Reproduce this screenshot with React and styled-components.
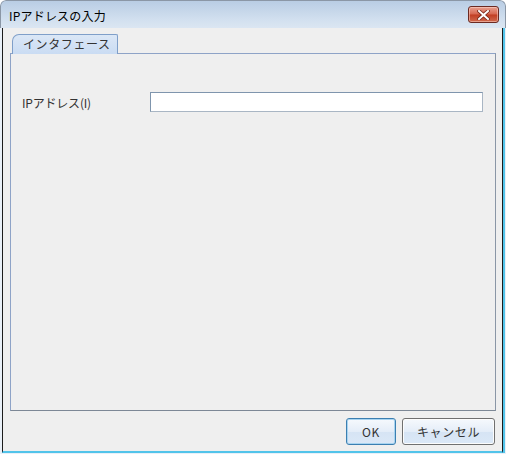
import styled, { createGlobalStyle } from 'styled-components';

const GlobalStyle = createGlobalStyle`
  html, body {
    margin: 0;
    padding: 0;
    background: #ffffff;
  }
  body {
    font-family: "Noto Sans CJK JP", "DejaVu Sans", sans-serif;
    font-size: 12px;
  }
`;

const Window = styled.div`
  width: 506px;
  height: 454px;
  box-sizing: border-box;
  display: flex;
  flex-direction: column;
  background: #e9f0f8;
  border-top-left-radius: 6px;
  border-top-right-radius: 6px;
  overflow: hidden;
`;

const TitleBar = styled.div`
  height: 28px;
  flex: none;
  box-sizing: border-box;
  display: flex;
  align-items: flex-start;
  justify-content: space-between;
  padding: 0 6px 0 8px;
  border: 1px solid #8b97a6;
  border-bottom: none;
  border-top-left-radius: 6px;
  border-top-right-radius: 6px;
  background: linear-gradient(#b9cde4, #d2e0ef 70%, #dbe6f2);
`;

const Title = styled.span`
  margin-top: 6px;
  font-size: 12px;
  color: #000;
  letter-spacing: 0.2px;
`;

const CloseButton = styled.div`
  margin-top: 5px;
  width: 31px;
  height: 17px;
  box-sizing: border-box;
  border: 1px solid #6b2a22;
  border-radius: 3px;
  background: linear-gradient(#e8a08f, #d6664f 48%, #c13d22 52%, #cf6a4e);
  display: flex;
  align-items: center;
  justify-content: center;
  box-shadow: inset 0 0 0 1px rgba(255, 220, 210, 0.5);
`;

const Body = styled.div`
  flex: 1;
  display: flex;
  flex-direction: column;
  margin: 0 3px 2px 2px;
  background: #efefef;
  border-left: 1px solid #1c1c1c;
  border-right: 1px solid #1c1c1c;
  border-bottom: 2px solid #52c4ea;
  box-shadow: 2px 0 0 #52c4ea;
  padding: 6px 6px 0 7px;
`;

const TabStrip = styled.div`
  display: flex;
  padding-left: 2px;
  height: 19px;
`;

const Tab = styled.div`
  width: 106px;
  box-sizing: border-box;
  border: 1px solid #7f9fc9;
  border-bottom: none;
  border-top-left-radius: 7px 7px;
  border-top-right-radius: 2px;
  background: linear-gradient(#dbe7f6, #cadcf3);
  color: #333;
  font-size: 12px;
  letter-spacing: 0.6px;
  padding-left: 10px;
  line-height: 18px;
  position: relative;
  z-index: 1;
  margin-bottom: -1px;
`;

const Panel = styled.div`
  height: 358px;
  box-sizing: border-box;
  border-top: 1px solid #8ea3c7;
  border-left: 1px solid #8ea3c7;
  border-right: 1px solid #8a96a6;
  border-bottom: 1px solid #7d8896;
  padding: 38px 12px 0 11px;
`;

const FieldRow = styled.div`
  display: grid;
  grid-template-columns: 128px 1fr;
  align-items: center;
`;

const Label = styled.label`
  font-size: 12px;
  color: #333;
  letter-spacing: -0.2px;
`;

const TextInput = styled.input`
  height: 20px;
  box-sizing: border-box;
  border: 1px solid #7f95ad;
  border-bottom-color: #a9b6c4;
  border-right-color: #a9b6c4;
  background: #fff;
  padding: 0 3px;
  outline: none;
`;

const Footer = styled.div`
  display: flex;
  justify-content: flex-end;
  gap: 6px;
  padding: 7px 1px 6px 0;
`;

const Button = styled.button`
  height: 27px;
  width: ${(p) => p.$width}px;
  box-sizing: border-box;
  border: 1px solid ${(p) => (p.$default ? '#3c7fb1' : '#707070')};
  border-radius: 3px;
  background: linear-gradient(#f6f9fd, #e4edf8 50%, #d6e4f4 52%, #dbe8f7);
  box-shadow: inset 0 0 0 1px ${(p) => (p.$default ? '#a8d4f0' : '#fcfcfc')};
  font-family: "Noto Sans CJK JP", "DejaVu Sans", sans-serif;
  font-size: 12px;
  color: #333;
  letter-spacing: 0.6px;
  padding: 0;
`;

export default function App() {
  return (
    <>
      <GlobalStyle />
      <Window>
        <TitleBar>
          <Title>IPアドレスの入力</Title>
          <CloseButton>
            <svg width="13" height="10" viewBox="0 0 13 10">
              <path d="M2 1 L11 9 M11 1 L2 9" stroke="#7a2a1c" strokeWidth="3.6" strokeLinecap="square" />
              <path d="M2 1 L11 9 M11 1 L2 9" stroke="#ffffff" strokeWidth="2" strokeLinecap="square" />
            </svg>
          </CloseButton>
        </TitleBar>
        <Body>
          <TabStrip>
            <Tab>インタフェース</Tab>
          </TabStrip>
          <Panel>
            <FieldRow>
              <Label>IPアドレス(I)</Label>
              <TextInput type="text" />
            </FieldRow>
          </Panel>
          <Footer>
            <Button $width={50} $default>OK</Button>
            <Button $width={93}>キャンセル</Button>
          </Footer>
        </Body>
      </Window>
    </>
  );
}
